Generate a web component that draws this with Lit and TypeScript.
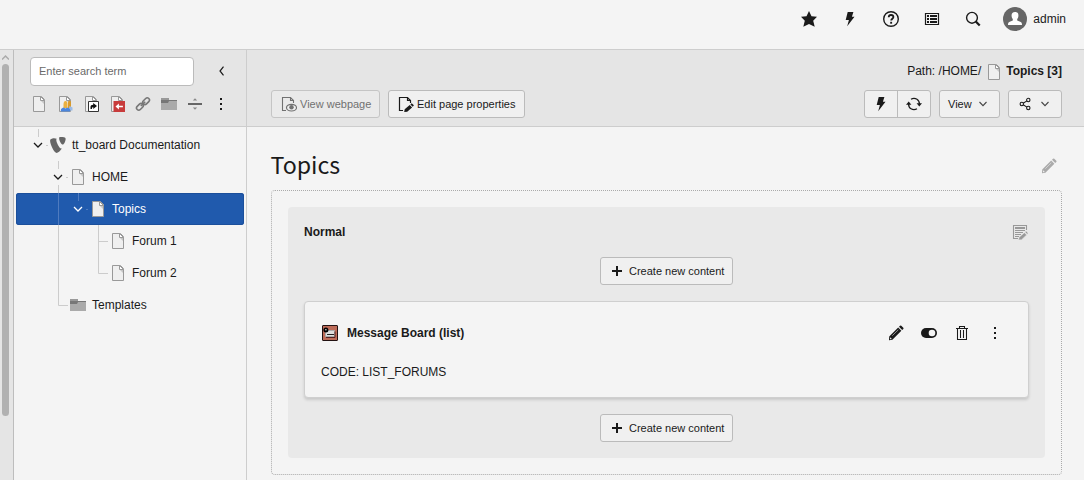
import { LitElement, html, svg, css } from "lit";
import { customElement } from "lit/decorators.js";

const page = svg`<path d="M2.5.5h8l3 3v12h-11z" fill="#efefef" stroke="#999"/><path d="M10 5l3 3V5z" fill="#bbb" opacity=".8"/><path d="M9.5.5v4h4z" fill="#fff" stroke="#999"/>`;
const bolt = svg`<path d="M5.700 1h5.700L9.900 5.700h2.600L5.200 15.200l1.700-6.200H3.700z"/>`;
const pencil = svg`<path d="M10.200 2.600l3.200 3.200-9 9L1 15.200l.2-3.600z"/><path d="M11 1.800l1-1q.7-.6 1.300 0l2 2q.6.6 0 1.200l-1.100 1z"/><path d="M4.300 10.700l6-5.900" stroke="#f4f4f4" stroke-width=".900" opacity=".6"/><path d="M2 12.300l1.900 1.800-1.800.200z" fill="#f4f4f4"/>`;
const dots = svg`<path d="M7 2h2v2H7zM7 7h2v2H7zM7 12h2v2H7z"/>`;
const folder = svg`<path d="M0 2h8v2h8v10H0z" fill="#aaa"/><path d="M0 4h16v1H8l-1 2H0z" fill="#777"/><path d="M0 2h8v2H0z" fill="#999"/>`;

const icons: Record<string, unknown> = {
  page, bolt, pencil, dots, folder,
  star: svg`<path d="M8 0l2.500 5.200 5.500.6-3.800 3.900 1.500 6L8 12.900l-5.700 2.800 1.500-6L0 5.800l5.500-.6z"/>`,
  help: svg`<circle cx="8" cy="8" r="7.3" fill="none" stroke="currentColor" stroke-width="1.4"/><path d="M5.7 6.2c.1-1.5 1-2.2 2.3-2.2s2.4.7 2.4 2c0 1.700-2.200 1.800-2.200 3.600" fill="none" stroke="currentColor" stroke-width="1.800"/><path d="M7.200 10.800h1.900v1.900H7.200z"/>`,
  list: svg`<path d="M1.500 2.500h13v11h-13z" fill="none" stroke="currentColor" stroke-width="1.200"/><path d="M3 4h2v2H3zM6 4h7v2H6zM3 7h2v2H3zM6 7h7v2H6zM3 10h2v2H3zM6 10h7v2H6z"/>`,
  search: svg`<circle cx="7" cy="6.800" r="5.400" fill="none" stroke="currentColor" stroke-width="1.400"/><path d="M10.800 10.600l3.900 4" stroke="currentColor" stroke-width="2.200"/>`,
  left: svg`<path d="M10.500 3.700L7 8l3.500 4.300" fill="none" stroke="currentColor" stroke-width="1.200"/>`,
  down: svg`<path d="M3.500 6L7 9.600 10.500 6" fill="none" stroke="#444" stroke-width="1.100"/>`,
  users: svg`${page}<path d="M6.500 8.500q0-3.500 2-3.500t2 3v4h-4z" fill="#eab040"/><path d="M11 6.500q0-2 1.500-2t1.500 2v7h-3z" fill="#d99a2b"/><path d="M12.500 10l3 1.500v3h-4z" fill="#9bbbe6"/><path d="M4 15.500q-1-3 2.500-4l2 1 2-1q3.500 1 2.500 4z" fill="#4b86dd"/>`,
  shortcut: svg`${page}<path d="M5.500 5.500h10v10h-10z" fill="#fff" stroke="#333"/><path d="M7.500 13v-2q0-2.200 2.700-2.200V7l3.800 3-3.800 2.900V11Q8.900 11 8.900 13z" fill="#111"/>`,
  external: svg`${page}<path d="M4.500 5H16v11H4.500z" fill="#c83c3c"/><path d="M6.500 10.500l3.400-3.100v2.300h4v1.600h-4v2.300z" fill="#fff"/>`,
  link: svg`<g fill="none" stroke="#777" stroke-width="1.600"><rect x="7.300" y="3" width="7.600" height="4.400" rx="2.200" transform="rotate(-45 11.100 5.200)"/><rect x="1.100" y="8.600" width="7.600" height="4.400" rx="2.200" transform="rotate(-45 4.900 10.800)"/><path d="M5.800 10l4.400-4.300"/></g>`,
  divider: svg`<path d="M1 7h14v2H1z" fill="#666"/><path d="M8 2.200l2.200 2.300H5.800zM8 13.800l2.200-2.300H5.800z" fill="#888"/>`,
  typo3: svg`<path d="M16.193 16.904c-.303.090-.545.125-.861.125-2.598 0-6.414-9.078-6.414-12.100 0-1.113.264-1.484.635-1.802C6.373 1.500 2.557 2.664 1.336 4.148c-.264.371-.424.954-.424 1.696C.912 10.562 5.948 23.270 9.500 23.270c1.643 0 4.418-2.703 6.693-6.366M14.538.73c3.287 0 6.577.53 6.577 2.385 0 3.763-2.387 8.323-3.606 8.323-2.175 0-4.879-6.046-4.879-9.069 0-1.378.530-1.639 1.908-1.639" fill="#666" transform="translate(-.600 -.400) scale(.770 .700)"/>`,
  viewpage: svg`<path d="M5 14.500H1.500V1.500h8l3 3V7M9.500 1.500v3h3" fill="none" stroke="currentColor" stroke-width="1.100"/><ellipse cx="10.500" cy="11.700" rx="5" ry="3.300" fill="#efefef" stroke="currentColor" stroke-width="1.200"/><circle cx="10.500" cy="11.300" r="2.200"/>`,
  editpage: svg`<path d="M5 14.500H1.500V1.500h8l3 3V7M9.500 1.500v3h3" fill="none" stroke="currentColor" stroke-width="1.200"/><path d="M11.700 9l2.400 2.400-4.900 4.400-3 .2.500-2.700zM12.400 8.400l1.300-1.100 2.200 2-1.200 1.400z"/>`,
  refresh: svg`<g fill="none" stroke="currentColor" stroke-width="1.300"><path d="M5 3.200Q8 1.500 11 3.200 13.400 4.600 13.400 8M11 12.800Q8 14.500 5 12.800 2.600 11.400 2.600 8"/></g><path d="M10.600 7.200H16l-2.700 3.200zM0 8.800h5.400L2.700 5.600z"/>`,
  share: svg`<g fill="none" stroke="currentColor" stroke-width="1.100"><circle cx="4.800" cy="8" r="1.700"/><circle cx="11.300" cy="4" r="1.700"/><circle cx="11.300" cy="12" r="1.700"/><path d="M6.200 7.200l3.700-2.300M6.200 8.800l3.700 2.300"/></g>`,
  content: svg`<path d="M6 14.500H1.500v-13h13V6" fill="none" stroke="currentColor" stroke-width="1.100"/><path d="M3 3h10v2H3zM3 6h10v1H3zM3 8h8v1H3zM3 10h6v1H3zM3 12h4v1H3z"/><path d="M12.400 8.700l2.200 2.200-5 4.800-3 .3.500-2.700zM13 8.100l1.100-1 2.100 2-1 1.200z" stroke="#e9e9e9" stroke-width=".500"/>`,
  plus: svg`<path d="M7 3h2v4h4v2H9v4H7V9H3V7h4z"/>`,
  toggle: svg`<rect y="3" width="16" height="10" rx="5"/><circle cx="11" cy="8" r="3.300" fill="#f4f4f4"/>`,
  trash: svg`<path d="M2 3.500h12M5.500 3V1.500h5V3M3.500 4v10.500h9V4M6.500 5v8M9.500 5v8" fill="none" stroke="currentColor" stroke-width="1.050"/>`,
  board: svg`<rect x=".500" y=".500" width="15" height="15" rx=".500" fill="#bd6b58" stroke="#211"/><path d="M3.500 5.500h9v6h-9z" fill="#ddd" stroke="#aaa"/><path d="M5 9h7v1H5z" fill="#222"/><path d="M4 12.500h9v-6" fill="none" stroke="#522"/><circle cx="3.900" cy="5" r="2.500" fill="#000"/><circle cx="3.900" cy="4.700" r=".700" fill="#fff"/>`,
};
const icon = (name: string) =>
  html`<svg class="i" width="16" height="16" viewBox="0 0 16 16" fill="currentColor">${icons[name]}</svg>`;

interface Node { label: string; icon: string; x: number; open?: boolean; lines: string; selected?: boolean }
const tree: Node[] = [
  { label: "tt_board Documentation", icon: "typo3", x: 34, open: true, lines: "M22.5 0v8M30 16.5h2" },
  { label: "HOME", icon: "page", x: 54, open: true, lines: "M42.5 0v8M42.5 24v8M50 16.5h2" },
  { label: "Topics", icon: "page", x: 74, open: true, lines: "M42.5 0v32M62.5 0v8M70 16.5h2", selected: true },
  { label: "Forum 1", icon: "page", x: 94, lines: "M42.5 0v32M82.5 0v32M82.5 16.5h9.500" },
  { label: "Forum 2", icon: "page", x: 94, lines: "M42.5 0v32M82.5 0v16.5h9.500" },
  { label: "Templates", icon: "folder", x: 54, lines: "M42.5 0v16.5h9.500" },
];

@customElement("app-root")
export class AppRoot extends LitElement {
  static styles = css`
    * { box-sizing: border-box; }
    :host { display: flex; flex-direction: column; height: 480px; overflow: hidden; background: #f4f4f4; color: #1a1a1a; font: 12px/18px "Liberation Sans", Arial, sans-serif; }
    .i { display: block; flex: none; }
    .top { flex: none; height: 50px; border-bottom: 1px solid #cdcdcd; display: flex; justify-content: flex-end; align-items: flex-start; padding: 7px 18px 0 0; }
    .tools { display: flex; gap: 25px; padding: 4px 22px 0 0; }
    .user { display: flex; align-items: center; gap: 6px; height: 24px; }
    .body { flex: 1; min-height: 0; display: flex; }
    .scroll { width: 14px; flex: none; background: #e5e5e5; border-right: 1px solid #bdbdbd; padding: 3px 0 0 2px; }
    .arrow { display: block; margin-bottom: 3px; }
    .thumb { width: 7px; height: 352px; border-radius: 4px; background: #b1b1b1; }
    .side { width: 233px; flex: none; border-right: 1px solid #cdcdcd; }
    .sidebar { height: 77px; background: #e5e5e5; border-bottom: 1px solid #cdcdcd; padding: 7px 17px 0 16px; }
    .find { display: flex; align-items: center; justify-content: space-between; }
    .find .i { margin-bottom: 1px; }
    .input { width: 164px; height: 29px; border: 1px solid #bbb; border-radius: 4px; background: #fff; color: #6a6a6a; font-size: 11px; line-height: 27px; padding-left: 8px; }
    .strip { display: flex; gap: 10px; padding: 10px 0 0 1px; }
    .tree { padding: 2px 2px 0; }
    .row { display: flex; align-items: center; height: 32px; border-radius: 3px; }
    .guides { display: block; flex: none; color: #1a1a1a; }
    .line { stroke: #ccc; fill: none; }
    .row span { margin-left: 6px; }
    .sel { background: #205aad; color: #fff; box-shadow: inset 0 0 0 1px #1b4f9b; }
    .sel .guides { color: #fff; }
    .sel .line { stroke: #4f7bbf; }
    .main { flex: 1; min-width: 0; }
    .head { height: 77px; background: #e5e5e5; border-bottom: 1px solid #cdcdcd; padding: 12px 22px 0 24px; }
    .path { display: flex; align-items: center; justify-content: flex-end; height: 18px; }
    .path .i { margin: 2px 4px 0 5px; }
    .bar { display: flex; gap: 8px; margin-top: 10px; }
    .space { flex: 1; }
    .btn { display: flex; align-items: center; height: 28px; border: 1px solid #bbb; border-radius: 3px; background: #f0f0f0; font-size: 11px; padding: 0 8px; gap: 4px; white-space: nowrap; }
    .btn.off { background: #eaeaea; border-color: #c5c5c5; color: #717171; }
    .view { width: 109px; padding-left: 9px; gap: 3px; }
    .edit { width: 137px; padding-left: 9px; gap: 3px; }
    .menu { width: 61px; padding: 0 7px 0 8px; justify-content: space-between; }
    .share { width: 54px; }
    .group { display: flex; width: 67px; height: 28px; border: 1px solid #bbb; border-radius: 3px; background: #f0f0f0; }
    .cell { flex: 1; display: grid; place-items: center; }
    .cell + .cell { border-left: 1px solid #bbb; }
    .title { display: flex; align-items: center; justify-content: space-between; height: 63px; padding: 15px 27px 0 24px; color: #1a1a1a; }
    .title .i { color: #aaa; }
    h1 { margin: 0 0 5px -0.5px; font: 400 23.2px/36px "Noto Sans CJK JP", "Noto Sans", sans-serif; }
    .grid { margin: 0 22px 0 24px; height: 285px; border: 1px dotted #aaa; border-radius: 4px; padding: 16px; }
    .col { height: 251px; background: #e9e9e9; border-radius: 4px; padding: 16px; display: flex; flex-direction: column; align-items: center; }
    .colhead { width: 100%; height: 18px; display: flex; justify-content: space-between; align-items: center; font-weight: bold; padding-right: 1px; }
    .colhead .i { color: #999; }
    .new { flex: none; width: 133px; gap: 4px; }
    .colhead + .new { margin: 16px 0; }
    .card { width: 100%; height: 97px; flex: none; margin-bottom: 16px; background: #f4f4f4; border: 1px solid #cfcfcf; border-radius: 4px; box-shadow: 0 2px 3px rgba(0,0,0,.14); padding: 22px 25px 0 16px; }
    .cardhead { display: flex; align-items: center; height: 18px; font-weight: bold; padding-left: 1px; }
    .cardhead .name { flex: 1; margin-left: 9px; }
    .actions { display: flex; gap: 17px; }
    .code { margin: 21px 0 0; }
  `;

  private row(n: Node) {
    return html`<div class="row ${n.selected ? "sel" : ""}">
      <svg class="guides" width=${n.x} height="32"><path class="line" d=${n.lines} />
        ${n.open ? svg`<path d="M${n.x - 16} 14l4 4 4-4" fill="none" stroke="currentColor" stroke-width="1.300"/>` : ""}
      </svg>${icon(n.icon)}<span>${n.label}</span></div>`;
  }

  render() {
    return html`
      <header class="top">
        <div class="tools">${["star", "bolt", "help", "list", "search"].map(icon)}</div>
        <div class="user">
          <svg class="i" width="24" height="24" viewBox="0 0 24 24"><circle cx="12" cy="12" r="12" fill="#666"/><path d="M12 5c2.500 0 3.600 1.500 3.400 4-.1 1.700-.7 2.500-1.200 3.100v1.400l3 1.200c1.600.6 1.800 1.700 1.800 3.300H5c0-1.600.2-2.700 1.800-3.300l3-1.200v-1.400C9.300 11.500 8.700 10.700 8.600 9 8.400 6.500 9.500 5 12 5z" fill="#fff"/></svg>
          <span>admin</span>
        </div>
      </header>
      <div class="body">
        <div class="scroll">
          <svg class="arrow" width="7" height="8"><path d="M0 6.500L3.500 3 7 6.500" fill="none" stroke="#aaa" stroke-width="1.500"/></svg>
          <div class="thumb"></div>
        </div>
        <nav class="side">
          <div class="sidebar">
            <div class="find"><div class="input">Enter search term</div>${icon("left")}</div>
            <div class="strip">${["page", "users", "shortcut", "external", "link", "folder", "divider", "dots"].map(icon)}</div>
          </div>
          <div class="tree">${tree.map((n) => this.row(n))}</div>
        </nav>
        <main class="main">
          <div class="head">
            <div class="path"><span>Path: /HOME/</span>${icon("page")}<b>Topics [3]</b></div>
            <div class="bar">
              <div class="btn off view">${icon("viewpage")}View webpage</div>
              <div class="btn edit">${icon("editpage")}Edit page properties</div>
              <div class="space"></div>
              <div class="group"><div class="cell">${icon("bolt")}</div><div class="cell">${icon("refresh")}</div></div>
              <div class="btn menu">View${icon("down")}</div>
              <div class="btn menu share">${icon("share")}${icon("down")}</div>
            </div>
          </div>
          <div class="title"><h1>Topics</h1>${icon("pencil")}</div>
          <section class="grid">
            <div class="col">
              <div class="colhead">Normal${icon("content")}</div>
              <div class="btn new">${icon("plus")}Create new content</div>
              <article class="card">
                <div class="cardhead">${icon("board")}<span class="name">Message Board (list)</span>
                  <div class="actions">${["pencil", "toggle", "trash", "dots"].map(icon)}</div></div>
                <p class="code">CODE: LIST_FORUMS</p>
              </article>
              <div class="btn new">${icon("plus")}Create new content</div>
            </div>
          </section>
        </main>
      </div>`;
  }
}
